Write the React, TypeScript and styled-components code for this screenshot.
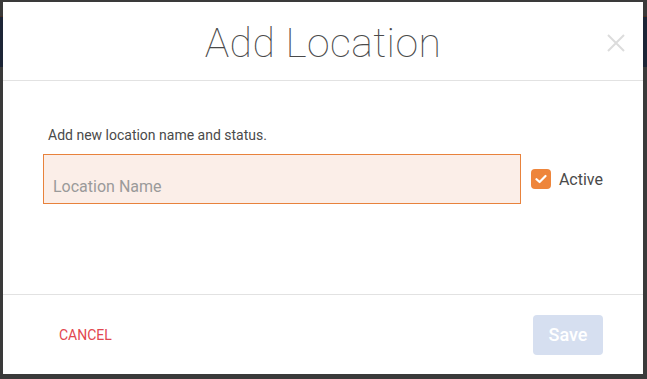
import React, { useState } from "react";
import styled, { createGlobalStyle } from "styled-components";

const GlobalStyle = createGlobalStyle`
  html, body {
    margin: 0;
    padding: 0;
    width: 100%;
    height: 100%;
    overflow: hidden;
  }
  body {
    font-family: Roboto, "Liberation Sans", Arial, sans-serif;
    background: #3a3a3a;
  }
`;

const Page = styled.div`
  display: flex;
  flex-direction: column;
  width: 100vw;
  height: 100vh;
  background: #3a3a3a;
`;

const PageHeader = styled.div`
  height: 50px;
  margin-top: 16px;
  background: #1c2536;
  border-top: 1px solid #4a3022;
`;

const Overlay = styled.div`
  position: fixed;
  inset: 0;
  display: flex;
  align-items: flex-start;
  justify-content: flex-start;
  padding: 2px 0 0 3px;
`;

const Modal = styled.div`
  display: flex;
  flex-direction: column;
  width: 640px;
  height: 372px;
  background: #ffffff;
`;

const Header = styled.div`
  display: grid;
  grid-template-columns: 1fr auto 1fr;
  align-items: center;
  height: 78px;
  padding: 0 18px;
  border-bottom: 1px solid #e2e2e2;
`;

const Title = styled.h1`
  grid-column: 2;
  margin: 0;
  padding-top: 3px;
  font-size: 41px;
  font-weight: 100;
  color: #4a4a4a;
  letter-spacing: 0.4px;
`;

const CloseButton = styled.button`
  grid-column: 3;
  justify-self: end;
  display: flex;
  padding: 0;
  margin-top: 4px;
  border: none;
  background: none;
  cursor: pointer;
`;

const Body = styled.div`
  flex: 1;
  padding: 44px 40px 0 40px;
  border-bottom: 1px solid #e2e2e2;
`;

const Description = styled.p`
  margin: 0 0 9px 5px;
  font-size: 14px;
  line-height: 20px;
  color: #4a4a4a;
`;

const Row = styled.div`
  display: flex;
  align-items: center;
  gap: 10px;
`;

const Input = styled.input`
  flex: 1;
  height: 50px;
  box-sizing: border-box;
  padding: 15px 9px 0 9px;
  border: 1px solid #e8823c;
  background: #fbeee8;
  font-family: inherit;
  font-size: 16px;
  color: #333;
  outline: none;
  &::placeholder {
    color: #9a9a9a;
  }
`;

const CheckLabel = styled.label`
  display: flex;
  align-items: center;
  gap: 8px;
  font-size: 16px;
  color: #4a4a4a;
  cursor: pointer;
`;

const Box = styled.span<{ checked: boolean }>`
  display: flex;
  align-items: center;
  justify-content: center;
  width: 20px;
  height: 20px;
  border-radius: 4px;
  background: ${(p) => (p.checked ? "#ee853b" : "#ffffff")};
  border: ${(p) => (p.checked ? "none" : "1px solid #bbb")};
`;

const Footer = styled.div`
  display: flex;
  align-items: center;
  justify-content: space-between;
  height: 79px;
  padding: 0 40px 0 40px;
`;

const CancelButton = styled.button`
  padding: 8px 16px;
  border: none;
  background: none;
  font-family: inherit;
  font-size: 14px;
  color: #e2474f;
  text-transform: uppercase;
  cursor: pointer;
`;

const SaveButton = styled.button`
  width: 70px;
  height: 40px;
  border: none;
  border-radius: 4px;
  background: #d6dff0;
  font-family: inherit;
  font-size: 18px;
  font-weight: 500;
  color: #ffffff;
  cursor: default;
`;

export default function App() {
  const [active, setActive] = useState(true);
  const [name, setName] = useState("");

  return (
    <>
      <GlobalStyle />
      <Page>
        <PageHeader />
      </Page>
      <Overlay>
        <Modal>
          <Header>
            <Title>Add Location</Title>
            <CloseButton aria-label="close">
              <svg width="18" height="18" viewBox="0 0 18 18">
                <path
                  d="M1 1 L17 17 M17 1 L1 17"
                  stroke="#dcdcdc"
                  strokeWidth="2"
                  fill="none"
                />
              </svg>
            </CloseButton>
          </Header>
          <Body>
            <Description>Add new location name and status.</Description>
            <Row>
              <Input
                placeholder="Location Name"
                value={name}
                onChange={(e) => setName(e.target.value)}
              />
              <CheckLabel onClick={() => setActive(!active)}>
                <Box checked={active}>
                  {active && (
                    <svg width="12" height="10" viewBox="0 0 12 10">
                      <path
                        d="M1.5 5.2 L4.6 8 L10.5 2"
                        stroke="#fff"
                        strokeWidth="2.2"
                        fill="none"
                        strokeLinecap="round"
                        strokeLinejoin="round"
                      />
                    </svg>
                  )}
                </Box>
                Active
              </CheckLabel>
            </Row>
          </Body>
          <Footer>
            <CancelButton>Cancel</CancelButton>
            <SaveButton disabled={!name}>Save</SaveButton>
          </Footer>
        </Modal>
      </Overlay>
    </>
  );
}
